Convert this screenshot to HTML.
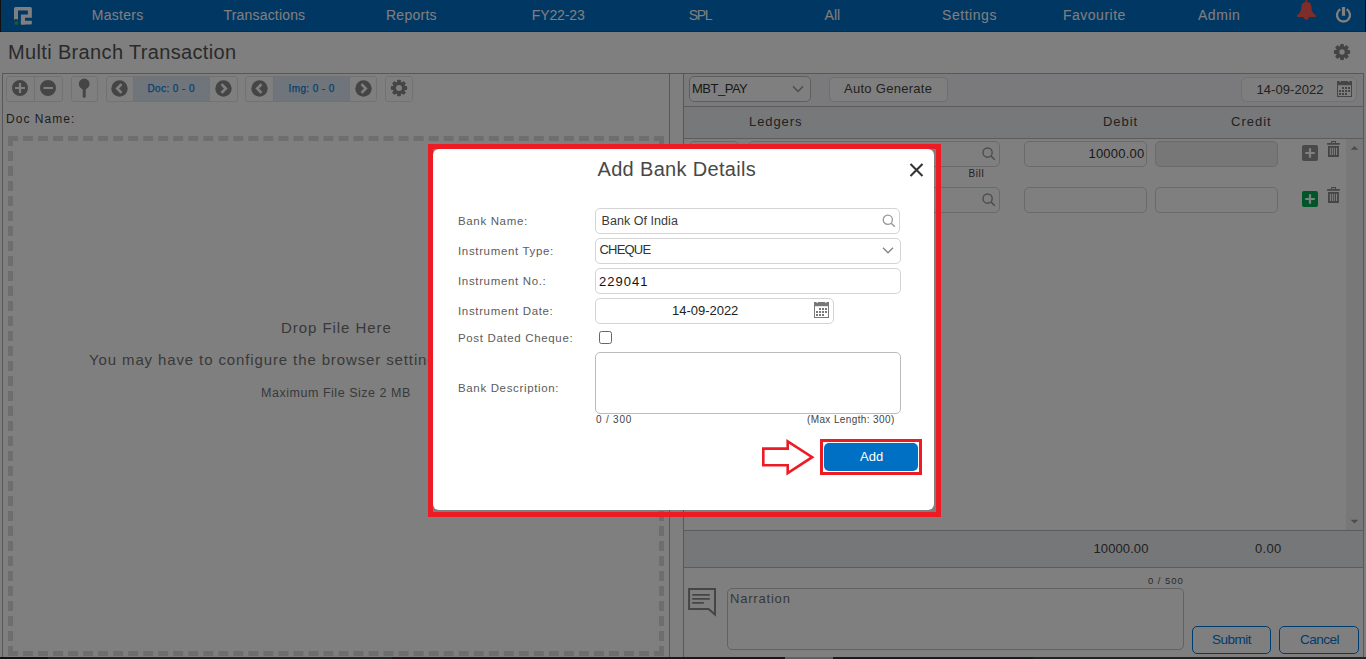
<!DOCTYPE html>
<html><head><meta charset="utf-8">
<style>
*{box-sizing:border-box;margin:0;padding:0}
html,body{width:1366px;height:659px;overflow:hidden;background:#fff;font-family:"Liberation Sans",sans-serif}
.a{position:absolute}
.t{position:absolute;white-space:nowrap;line-height:1}
.nav{color:#fff;font-size:14px;top:8px}
.bx{position:absolute;border:1px solid #e4e4e4;border-radius:3px}
.ic{position:absolute}
.lab{color:#5c5c5c;font-size:11.5px;letter-spacing:.65px;left:458px}
.inp{position:absolute;border:1px solid #d4d4d4;border-radius:5px;background:#fff}
#ov{position:absolute;left:0;top:0;width:1366px;height:659px;background:rgba(0,0,0,.5)}
</style></head><body>
<!-- HEADER -->
<div class="a" style="left:0;top:0;width:1366px;height:32px;background:#006ec7"></div>
<div class="a" style="left:0;top:31px;width:1366px;height:1px;background:#005eaa"></div>
<div class="a" style="left:0;top:0;width:1px;height:32px;background:#222"></div>
<svg class="a" style="left:14px;top:7px" width="18" height="18" viewBox="0 0 18 18">
 <path fill="#fff" d="M1.5,0H16.35Q17.85,0 17.85,1.5V10.7H11V17.4H6.9V7.6H13.85V3.6H4V12.8L2,12L0,12.8V1.5Q0,0 1.5,0Z"/>
 <path fill="#fff" d="M6.9,13.75H17Q17.85,13.75 17.85,14.6V16.6Q17.85,17.4 17,17.4H6.9Z"/>
 <circle cx="2.4" cy="15.9" r="2" fill="#2db84d"/>
</svg>
<span class="t nav" style="left:91.7px;letter-spacing:.3px">Masters</span>
<span class="t nav" style="left:223.5px;letter-spacing:.18px">Transactions</span>
<span class="t nav" style="left:386px;letter-spacing:.25px">Reports</span>
<span class="t nav" style="left:531.7px;letter-spacing:-.1px">FY22-23</span>
<span class="t nav" style="left:688.7px;letter-spacing:-1.25px">SPL</span>
<span class="t nav" style="left:824.6px">All</span>
<span class="t nav" style="left:942px;letter-spacing:.55px">Settings</span>
<span class="t nav" style="left:1063px;letter-spacing:.5px">Favourite</span>
<span class="t nav" style="left:1198px;letter-spacing:.53px">Admin</span>
<!-- bell -->
<svg class="a" style="left:1296px;top:0" width="21" height="21" viewBox="0 0 21 21">
 <path fill="#ff5a50" d="M9.5,0H11.1V2C14,2.3 15.3,3.8 15.4,6.5C15.6,10.5 16.2,12.8 19.7,15V17H1.1V15C4.6,12.8 5.2,10.5 5.4,6.5C5.5,3.8 6.8,2.3 9.5,2Z"/>
 <path fill="#ff5a50" d="M7.5,17H13C12.8,18.8 11.8,19.8 10.25,19.8C8.7,19.8 7.7,18.8 7.5,17Z"/>
</svg>
<!-- power -->
<svg class="a" style="left:1335px;top:6px" width="18" height="18" viewBox="0 0 18 18">
 <path fill="none" stroke="#fff" stroke-width="2.3" d="M5.3,3.34A6.5,6.5 0 1 0 11.7,3.34"/>
 <path stroke="#fff" stroke-width="3.2" d="M8.5,1V9.8"/>
</svg>
<div class="a" style="left:1365px;top:0;width:1px;height:32px;background:#222"></div>

<!-- TITLE -->
<span class="t" style="left:8px;top:42px;font-size:20px;color:#555;letter-spacing:.35px">Multi Branch Transaction</span>
<!-- page gear -->
<svg class="a" style="left:1332.7px;top:43.2px" width="18" height="18" viewBox="-9 -9 18 18">
 <g fill="#888"><circle r="6"/>
 <rect x="-1.9" y="-8.1" width="3.8" height="16.2" rx=".9"/><rect x="-1.9" y="-8.1" width="3.8" height="16.2" rx=".9" transform="rotate(45)"/><rect x="-1.9" y="-8.1" width="3.8" height="16.2" rx=".9" transform="rotate(90)"/><rect x="-1.9" y="-8.1" width="3.8" height="16.2" rx=".9" transform="rotate(135)"/></g>
 <circle r="2.7" fill="#fff"/>
</svg>

<!-- LEFT PANEL -->
<div class="a" style="left:2px;top:73px;width:668px;height:600px;border:1px solid #b0b0b0"></div>
<!-- toolbar group 1 -->
<div class="bx" style="left:6px;top:76px;width:29px;height:26px;border-radius:3px 0 0 3px"></div>
<div class="bx" style="left:34px;top:76px;width:29px;height:26px;border-radius:0 3px 3px 0"></div>
<svg class="ic" style="left:12px;top:80px" width="16" height="16" viewBox="0 0 16 16"><path fill="#8a8a8a" fill-rule="evenodd" d="M8,0A8,8 0 1 1 8,16A8,8 0 1 1 8,0ZM6.9,3V6.9H3V9.1H6.9V13H9.1V9.1H13V6.9H9.1V3Z"/></svg>
<svg class="ic" style="left:40px;top:80px" width="16" height="16" viewBox="0 0 16 16"><path fill="#8a8a8a" fill-rule="evenodd" d="M8,0A8,8 0 1 1 8,16A8,8 0 1 1 8,0ZM3.5,6.9V9.1H13V6.9Z"/></svg>
<!-- pin -->
<div class="bx" style="left:71px;top:76px;width:27px;height:26px"></div>
<svg class="ic" style="left:78px;top:78px" width="13" height="21" viewBox="0 0 13 21"><circle cx="6.2" cy="6" r="5.4" fill="#8a8a8a"/><rect x="4.7" y="10" width="3" height="9.8" rx="1.2" fill="#8a8a8a"/></svg>
<!-- doc group -->
<div class="bx" style="left:106px;top:76px;width:132px;height:26px"></div>
<div class="a" style="left:133px;top:77px;width:77px;height:24px;background:#deebf6;border-left:1px solid #e4e4e4;border-right:1px solid #e4e4e4"></div>
<svg class="ic" style="left:111px;top:80px" width="17" height="17" viewBox="0 0 17 17"><circle cx="8.5" cy="8.5" r="8.2" fill="#8a8a8a"/><path d="M10.5,4.2L6.2,8.5L10.5,12.8" fill="none" stroke="#fff" stroke-width="2.6"/></svg>
<span class="t" style="left:147.5px;top:84px;font-size:10px;color:#1280e0;letter-spacing:.4px;-webkit-text-stroke:.25px #1280e0">Doc: 0 - 0</span>
<svg class="ic" style="left:215px;top:80px" width="17" height="17" viewBox="0 0 17 17"><circle cx="8.5" cy="8.5" r="8.2" fill="#8a8a8a"/><path d="M6.5,4.2L10.8,8.5L6.5,12.8" fill="none" stroke="#fff" stroke-width="2.6"/></svg>
<!-- img group -->
<div class="bx" style="left:245px;top:76px;width:132px;height:26px"></div>
<div class="a" style="left:273px;top:77px;width:77px;height:24px;background:#deebf6;border-left:1px solid #e4e4e4;border-right:1px solid #e4e4e4"></div>
<svg class="ic" style="left:251px;top:80px" width="17" height="17" viewBox="0 0 17 17"><circle cx="8.5" cy="8.5" r="8.2" fill="#8a8a8a"/><path d="M10.5,4.2L6.2,8.5L10.5,12.8" fill="none" stroke="#fff" stroke-width="2.6"/></svg>
<span class="t" style="left:288.5px;top:84px;font-size:10px;color:#1280e0;letter-spacing:.4px;-webkit-text-stroke:.25px #1280e0">Img: 0 - 0</span>
<svg class="ic" style="left:355px;top:80px" width="17" height="17" viewBox="0 0 17 17"><circle cx="8.5" cy="8.5" r="8.2" fill="#8a8a8a"/><path d="M6.5,4.2L10.8,8.5L6.5,12.8" fill="none" stroke="#fff" stroke-width="2.6"/></svg>
<!-- gear btn -->
<div class="bx" style="left:385px;top:76px;width:28px;height:26px"></div>
<svg class="a" style="left:390px;top:79px" width="18" height="18" viewBox="-9 -9 18 18">
 <g fill="#8a8a8a"><circle r="6.2"/>
 <rect x="-1.9" y="-8.2" width="3.8" height="16.4" rx=".8"/><rect x="-1.9" y="-8.2" width="3.8" height="16.4" rx=".8" transform="rotate(45)"/><rect x="-1.9" y="-8.2" width="3.8" height="16.4" rx=".8" transform="rotate(90)"/><rect x="-1.9" y="-8.2" width="3.8" height="16.4" rx=".8" transform="rotate(135)"/></g>
 <circle r="3" fill="#fff"/>
</svg>
<span class="t" style="left:6px;top:113px;font-size:12px;color:#3c3c3c;letter-spacing:1.05px">Doc Name:</span>
<div class="a" style="left:8px;top:136px;width:656px;height:520px;border:5px dashed #dddddd"></div>
<span class="t" style="left:281px;top:320px;font-size:15px;color:#737373;letter-spacing:.95px">Drop File Here</span>
<span class="t" style="left:89px;top:352px;font-size:15px;color:#737373;letter-spacing:.88px">You may have to configure the browser settings to allow the file upload</span>
<span class="t" style="left:261px;top:387px;font-size:12.5px;color:#737373;letter-spacing:.53px">Maximum File Size 2 MB</span>

<!-- RIGHT PANEL -->
<div class="a" style="left:683px;top:73px;width:681px;height:600px;border:1px solid #b0b0b0"></div>
<div class="a" style="left:684px;top:74px;width:679px;height:32px;background:#f4f5f8"></div>
<div class="a" style="left:684px;top:106px;width:679px;height:1px;background:#b8b8b8"></div>
<div class="a" style="left:684px;top:107px;width:679px;height:31px;background:#eef0f3"></div>
<div class="a" style="left:684px;top:138px;width:679px;height:1px;background:#b8b8b8"></div>
<!-- select -->
<div class="a" style="left:689px;top:76px;width:122px;height:26px;border:1px solid #bdbdbd;border-radius:5px;background:#fff"></div>
<span class="t" style="left:692px;top:82px;font-size:13px;color:#333;letter-spacing:-.5px">MBT_PAY</span>
<svg class="a" style="left:792px;top:85px" width="12" height="8" viewBox="0 0 12 8"><path d="M1,1.2L6,6.4L11,1.2" fill="none" stroke="#999" stroke-width="1.5"/></svg>
<!-- auto generate -->
<div class="a" style="left:828.5px;top:76.5px;width:119px;height:25.5px;border:1px solid #dcdcdc;border-radius:5px;background:#fff"></div>
<span class="t" style="left:844px;top:82px;font-size:13px;color:#444;letter-spacing:.28px">Auto Generate</span>
<!-- date -->
<div class="a" style="left:1241px;top:77px;width:116px;height:25px;border:1px solid #e2e2e2;border-radius:6px;background:#fcfcfc"></div>
<span class="t" style="left:1256.5px;top:82.5px;font-size:13px;color:#444;letter-spacing:.05px">14-09-2022</span>
<svg class="a" style="left:1337px;top:81px" width="15" height="16" viewBox="0 0 15 16">
 <rect x="0" y="0" width="15" height="16" fill="#8a8a8a"/>
 <rect x="1" y="4.2" width="13" height="10.8" fill="#fff"/>
 <rect x="2.5" y="0" width="1.5" height="0.8" fill="#fff"/><rect x="11" y="0" width="1.5" height="0.8" fill="#fff"/>
 <g fill="#8a8a8a"><rect x="5" y="6" width="2" height="2"/><rect x="8" y="6" width="2" height="2"/><rect x="11" y="6" width="2" height="2"/>
 <rect x="2" y="9" width="2" height="2"/><rect x="5" y="9" width="2" height="2"/><rect x="8" y="9" width="2" height="2"/><rect x="11" y="9" width="2" height="2"/>
 <rect x="2" y="12" width="2" height="2"/><rect x="5" y="12" width="2" height="2"/><rect x="8" y="12" width="2" height="2"/></g>
</svg>
<span class="t" style="left:749px;top:115px;font-size:13px;color:#444;letter-spacing:.9px">Ledgers</span>
<span class="t" style="left:1103px;top:115px;font-size:13px;color:#444;letter-spacing:.95px">Debit</span>
<span class="t" style="left:1231px;top:115px;font-size:13px;color:#444;letter-spacing:1px">Credit</span>
<!-- rows -->
<div class="inp" style="left:689px;top:141px;width:50px;height:26px;border-color:#d4d4d4"></div>
<div class="inp" style="left:748px;top:141px;width:252px;height:26px;border-color:#d4d4d4"></div>
<svg class="a" style="left:982px;top:147px" width="14" height="14" viewBox="0 0 14 14"><circle cx="5.6" cy="5.6" r="4.6" fill="none" stroke="#999" stroke-width="1.4"/><path d="M9,9L12.8,12.8" stroke="#999" stroke-width="1.6"/></svg>
<span class="t" style="left:968.5px;top:169px;font-size:10px;color:#444;letter-spacing:.6px">Bill</span>
<div class="inp" style="left:1024px;top:141px;width:123px;height:26px;border-color:#d4d4d4"></div>
<span class="t" style="left:1088.5px;top:147px;font-size:13px;color:#333;letter-spacing:.2px">10000.00</span>
<div class="inp" style="left:1155px;top:141px;width:123px;height:26px;border-color:#d4d4d4;background:#eeeeee"></div>
<div class="a" style="left:1302px;top:145px;width:16px;height:16px;background:#959595;border-radius:2px"></div>
<svg class="a" style="left:1302px;top:145px" width="16" height="16" viewBox="0 0 16 16"><path d="M3.2,8H12.8M8,3.2V12.8" stroke="#fff" stroke-width="2.2"/></svg>
<svg class="a" style="left:1327px;top:141px" width="14" height="17" viewBox="0 0 14 17">
 <path fill="#8a8a8a" fill-rule="evenodd" d="M4.1,0.1H9V2.1H12.8V3.8H0.1V2.1H4.1ZM5.2,0.9V2.1H7.9V0.9Z"/>
 <path fill="#8a8a8a" fill-rule="evenodd" d="M1,5H11.9V15.9H1ZM2.8,6.8V14.1H3.9V6.8ZM4.8,6.8V14.1H5.9V6.8ZM6.8,6.8V14.1H7.9V6.8ZM9,6.8V14.1H10.1V6.8Z"/>
</svg>
<div class="inp" style="left:689px;top:187px;width:50px;height:26px;border-color:#d4d4d4"></div>
<div class="inp" style="left:748px;top:187px;width:252px;height:26px;border-color:#d4d4d4"></div>
<svg class="a" style="left:982px;top:193px" width="14" height="14" viewBox="0 0 14 14"><circle cx="5.6" cy="5.6" r="4.6" fill="none" stroke="#999" stroke-width="1.4"/><path d="M9,9L12.8,12.8" stroke="#999" stroke-width="1.6"/></svg>
<div class="inp" style="left:1024px;top:187px;width:123px;height:26px;border-color:#d4d4d4"></div>
<div class="inp" style="left:1155px;top:187px;width:123px;height:26px;border-color:#d4d4d4"></div>
<div class="a" style="left:1302px;top:191px;width:16px;height:16px;background:#00aa52;border-radius:2px"></div>
<svg class="a" style="left:1302px;top:191px" width="16" height="16" viewBox="0 0 16 16"><path d="M3.2,8H12.8M8,3.2V12.8" stroke="#fff" stroke-width="2.2"/></svg>
<svg class="a" style="left:1327px;top:187px" width="14" height="17" viewBox="0 0 14 17">
 <path fill="#8a8a8a" fill-rule="evenodd" d="M4.1,0.1H9V2.1H12.8V3.8H0.1V2.1H4.1ZM5.2,0.9V2.1H7.9V0.9Z"/>
 <path fill="#8a8a8a" fill-rule="evenodd" d="M1,5H11.9V15.9H1ZM2.8,6.8V14.1H3.9V6.8ZM4.8,6.8V14.1H5.9V6.8ZM6.8,6.8V14.1H7.9V6.8ZM9,6.8V14.1H10.1V6.8Z"/>
</svg>
<!-- scrollbar -->
<div class="a" style="left:1346px;top:139px;width:17px;height:391px;background:#f1f1f1"></div>
<svg class="a" style="left:1350px;top:145px" width="9" height="6" viewBox="0 0 9 6"><path d="M0.7,4.8L4.5,1L8.3,4.8Z" fill="#999"/></svg>
<svg class="a" style="left:1350px;top:518.5px" width="9" height="6" viewBox="0 0 9 6"><path d="M0.7,0.7L4.5,4.6L8.3,0.7Z" fill="#999"/></svg>
<!-- totals -->
<div class="a" style="left:684px;top:530px;width:679px;height:1px;background:#b8b8b8"></div>
<div class="a" style="left:684px;top:531px;width:679px;height:36px;background:#eceef2"></div>
<div class="a" style="left:684px;top:567px;width:679px;height:1px;background:#b8b8b8"></div>
<span class="t" style="left:1093.5px;top:542px;font-size:13px;color:#444;letter-spacing:.1px">10000.00</span>
<span class="t" style="left:1255px;top:542px;font-size:13px;color:#444;letter-spacing:.3px">0.00</span>
<!-- narration -->
<svg class="a" style="left:688px;top:588px" width="29" height="29" viewBox="0 0 29 29">
 <path d="M1.1,1.1H27V26.6L20.6,20.9H1.1Z" fill="none" stroke="#8a8a8a" stroke-width="2"/>
 <path d="M4.2,6.9H21.8M4.2,10.9H21.8M4.2,14.9H15.8" stroke="#8a8a8a" stroke-width="1.7"/>
</svg>
<span class="t" style="left:1148px;top:576px;font-size:9.5px;color:#555;letter-spacing:.95px">0 / 500</span>
<div class="a" style="left:727px;top:588px;width:457px;height:62px;border:1px solid #c4c4c4;border-radius:5px"></div>
<span class="t" style="left:730px;top:591.5px;font-size:13px;color:#707070;letter-spacing:.8px">Narration</span>
<div class="a" style="left:1192px;top:626px;width:79px;height:28px;border:1px solid #0078dc;border-radius:5px"></div>
<span class="t" style="left:1212px;top:633px;font-size:13.5px;color:#0078dc;letter-spacing:-.5px">Submit</span>
<div class="a" style="left:1279px;top:626px;width:80px;height:28px;border:1px solid #0078dc;border-radius:5px"></div>
<span class="t" style="left:1300px;top:633px;font-size:13.5px;color:#0078dc;letter-spacing:-.5px">Cancel</span>
<!-- bottom strip -->
<div class="a" style="left:0;top:657px;width:1366px;height:2px;background:#444"></div>
<div class="a" style="left:0;top:657px;width:48px;height:2px;background:#222"></div>
<div class="a" style="left:392px;top:657px;width:393px;height:2px;background:#551e30"></div>
<div class="a" style="left:785px;top:657px;width:48px;height:2px;background:#d4b4c0"></div>
<div class="a" style="left:833px;top:657px;width:200px;height:2px;background:#40303c"></div>

<div class="a" style="left:2px;top:73px;width:1362px;height:1px;background:#b0b0b0"></div>
<!-- OVERLAY -->
<div id="ov"></div>

<!-- MODAL -->
<div class="a" style="left:428px;top:144px;width:513px;height:373px;border:5px solid #ed1c24"></div>
<div class="a" style="left:433px;top:149px;width:501px;height:361px;background:#fff;border-radius:6px"></div>
<span class="t" style="left:597.5px;top:159px;font-size:20px;color:#484848;letter-spacing:.33px">Add Bank Details</span>
<svg class="a" style="left:909px;top:163px" width="15" height="14" viewBox="0 0 15 14"><path d="M1.5,1L13.5,13M13.5,1L1.5,13" stroke="#333" stroke-width="2.1"/></svg>
<span class="t lab" style="top:216px">Bank Name:</span>
<span class="t lab" style="top:246px">Instrument Type:</span>
<span class="t lab" style="top:276px">Instrument No.:</span>
<span class="t lab" style="top:306px">Instrument Date:</span>
<span class="t lab" style="top:333px">Post Dated Cheque:</span>
<span class="t lab" style="top:383px">Bank Description:</span>
<div class="inp" style="left:595px;top:208px;width:305px;height:26px"></div>
<span class="t" style="left:601.5px;top:214.5px;font-size:12.5px;color:#3a3a3a;letter-spacing:.05px">Bank Of India</span>
<svg class="a" style="left:882px;top:214px" width="14" height="14" viewBox="0 0 14 14"><circle cx="5.8" cy="5.8" r="4.6" fill="none" stroke="#999" stroke-width="1.3"/><path d="M9.2,9.2L12.8,12.8" stroke="#999" stroke-width="1.5"/></svg>
<div class="inp" style="left:595px;top:238px;width:306px;height:26px"></div>
<span class="t" style="left:599.5px;top:243px;font-size:13px;color:#333;letter-spacing:-.8px">CHEQUE</span>
<svg class="a" style="left:882px;top:246px" width="12" height="9" viewBox="0 0 12 9"><path d="M1,1.8L6,6.8L11,1.8" fill="none" stroke="#888" stroke-width="1.4"/></svg>
<div class="inp" style="left:595px;top:268px;width:306px;height:26px"></div>
<span class="t" style="left:599px;top:274.5px;font-size:13px;color:#111;letter-spacing:1px">229041</span>
<div class="inp" style="left:595px;top:298px;width:239px;height:26px"></div>
<span class="t" style="left:672px;top:304px;font-size:13px;color:#222;letter-spacing:-.02px">14-09-2022</span>
<svg class="a" style="left:814px;top:302px" width="15" height="16" viewBox="0 0 15 16">
 <rect x="0" y="0" width="15" height="16" fill="#777"/>
 <rect x="1" y="4.2" width="13" height="10.8" fill="#fff"/>
 <rect x="2.5" y="0" width="1.5" height="0.8" fill="#fff"/><rect x="11" y="0" width="1.5" height="0.8" fill="#fff"/>
 <g fill="#777"><rect x="5" y="6" width="2" height="2"/><rect x="8" y="6" width="2" height="2"/><rect x="11" y="6" width="2" height="2"/>
 <rect x="2" y="9" width="2" height="2"/><rect x="5" y="9" width="2" height="2"/><rect x="8" y="9" width="2" height="2"/><rect x="11" y="9" width="2" height="2"/>
 <rect x="2" y="12" width="2" height="2"/><rect x="5" y="12" width="2" height="2"/><rect x="8" y="12" width="2" height="2"/></g>
</svg>
<div class="a" style="left:599px;top:331px;width:13px;height:13px;border:1.5px solid #666;border-radius:2.5px"></div>
<div class="inp" style="left:595px;top:352px;width:306px;height:62px;border-color:#bbb"></div>
<span class="t" style="left:596px;top:414.5px;font-size:10px;color:#444;letter-spacing:.8px">0 / 300</span>
<span class="t" style="left:807px;top:414.5px;font-size:10px;color:#444;letter-spacing:.38px">(Max Length: 300)</span>
<svg class="a" style="left:755px;top:432px" width="70" height="50" viewBox="755 432 70 50">
 <path d="M763.3,448.6H787.7V441.3L812.2,457.2L787.7,473.1V465.2H763.3Z" fill="none" stroke="#ed1c24" stroke-width="2.6" stroke-linejoin="miter"/>
</svg>
<div class="a" style="left:820px;top:439px;width:102px;height:36px;border:3px solid #ed1c24"></div>
<div class="a" style="left:824px;top:443px;width:94px;height:28px;background:#0070c4;border-radius:5px"></div>
<span class="t" style="left:860px;top:450px;font-size:13px;color:#fff">Add</span>
</body></html>
